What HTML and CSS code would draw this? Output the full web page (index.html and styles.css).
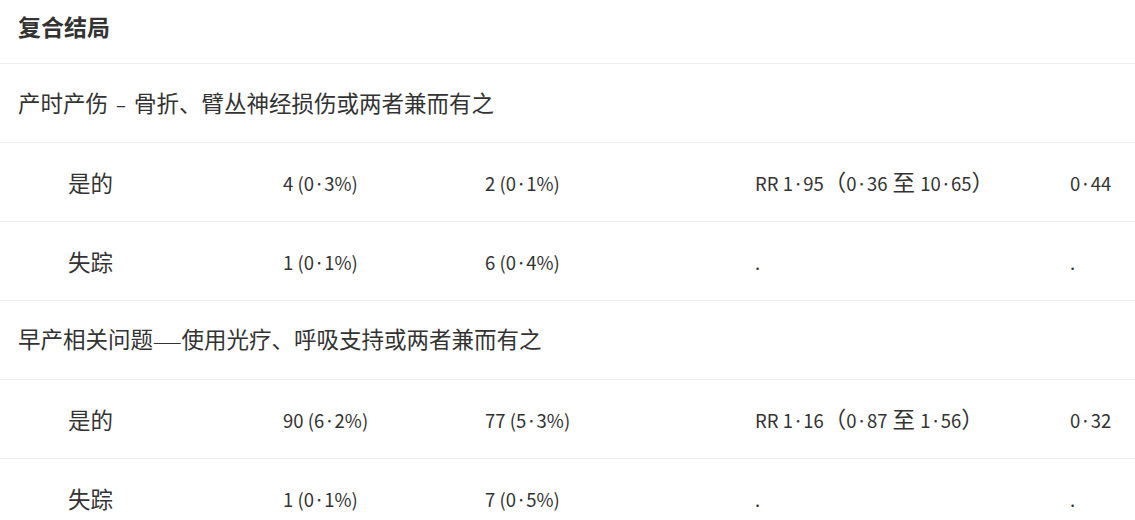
FILE: index.html
```html
<!DOCTYPE html>
<html lang="en">
<head>
    <meta charset="UTF-8">
    <title>复合结局</title>
    <link rel="stylesheet" href="styles.css">
</head>
<body>
    <table class="outcome-table">
        <colgroup>
            <col class="col-label">
            <col class="col-group-a">
            <col class="col-group-b">
            <col class="col-effect">
            <col class="col-p">
        </colgroup>
        <tbody>
            <tr class="title-row">
                <td colspan="5">复合结局</td>
            </tr>
            <tr class="section-row">
                <td colspan="5">产时产伤<span class="num sep">–</span>骨折、臂丛神经损伤或两者兼而有之</td>
            </tr>
            <tr class="data-row">
                <td class="sub-label">是的</td>
                <td><span class="num">4 (0·3%)</span></td>
                <td><span class="num">2 (0·1%)</span></td>
                <td><span class="num">RR 1·95</span>（<span class="num">0·36</span> 至 <span class="num">10·65</span>）</td>
                <td><span class="num">0·44</span></td>
            </tr>
            <tr class="data-row">
                <td class="sub-label">失踪</td>
                <td><span class="num">1 (0·1%)</span></td>
                <td><span class="num">6 (0·4%)</span></td>
                <td><span class="num">.</span></td>
                <td><span class="num">.</span></td>
            </tr>
            <tr class="section-row">
                <td colspan="5">早产相关问题<span class="dash">——</span>使用光疗、呼吸支持或两者兼而有之</td>
            </tr>
            <tr class="data-row">
                <td class="sub-label">是的</td>
                <td><span class="num">90 (6·2%)</span></td>
                <td><span class="num">77 (5·3%)</span></td>
                <td><span class="num">RR 1·16</span>（<span class="num">0·87</span> 至 <span class="num">1·56</span>）</td>
                <td><span class="num">0·32</span></td>
            </tr>
            <tr class="data-row">
                <td class="sub-label">失踪</td>
                <td><span class="num">1 (0·1%)</span></td>
                <td><span class="num">7 (0·5%)</span></td>
                <td><span class="num">.</span></td>
                <td><span class="num">.</span></td>
            </tr>
        </tbody>
    </table>
</body>
</html>
```

FILE: styles.css
```css
* {
    margin: 0;
    padding: 0;
    box-sizing: border-box;
}

body {
    font-family: "Noto Sans CJK SC", "Noto Sans", sans-serif;
    font-size: 22.5px;
    color: #333333;
    background-color: #ffffff;
}

.outcome-table {
    width: 1135px;
    table-layout: fixed;
    border-collapse: collapse;
}

.col-label { width: 265px; }
.col-group-a { width: 202px; }
.col-group-b { width: 270px; }
.col-effect { width: 315px; }
.col-p { width: 83px; }

.outcome-table td {
    padding: 0 0 0 18px;
    height: 79px;
    line-height: 30px;
    vertical-align: middle;
    white-space: nowrap;
    border-bottom: 1px solid #eeeeee;
}

.title-row td {
    height: 63px;
    padding-bottom: 10px;
    font-size: 23px;
    font-weight: 700;
}

.outcome-table .sub-label {
    padding-left: 68px;
}

/* latin runs: narrower figures and a half-width middle dot */
.num {
    font-family: "Noto Sans CJK JP", "Noto Sans CJK SC", sans-serif;
    font-size: 18.5px;
}

.sep {
    margin: 0 8px;
}

.dash {
    font-size: 17px;
}
```
